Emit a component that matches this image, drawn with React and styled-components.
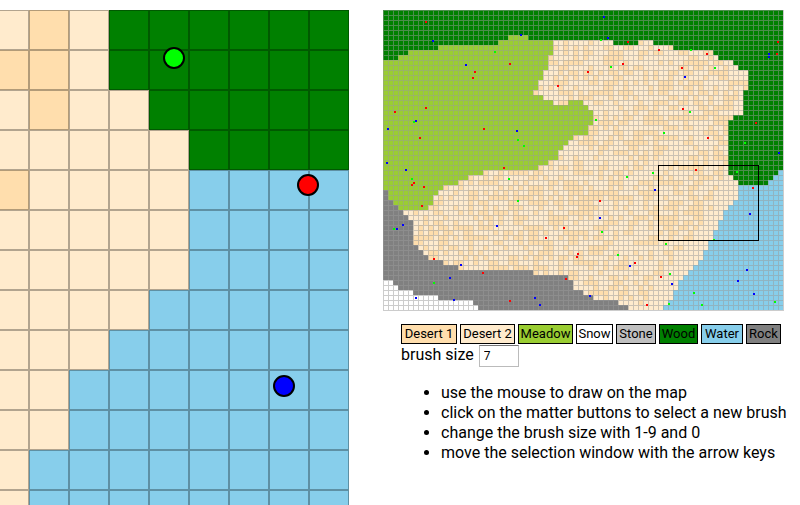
import React, { useState } from "react";
import styled, { createGlobalStyle } from "styled-components";

const GlobalStyle = createGlobalStyle`
  body {
    margin: 0;
    overflow: hidden;
    background: #fff;
    color: #000;
    font-family: "Trebuchet MS", Roboto, sans-serif;
    font-size: 16px;
    line-height: 20px;
  }
`;

const Page = styled.main`
  display: flex;
  align-items: flex-start;
  gap: 34px;
  height: 100vh;
  padding-top: 10px;
  box-sizing: border-box;
  overflow: hidden;
`;

const Viewport = styled.section`
  display: flex;
  justify-content: flex-end;
  flex: 0 0 349px;
  overflow: hidden;
`;

const MapDrawing = styled.svg`
  display: block;
  flex: none;
`;

const Sidebar = styled.section`
  flex: 1;
  min-width: 0;
`;

const Controls = styled.div`
  max-width: 380px;
  padding: 13px 0 0 18px;
`;

const Matters = styled.div`
  display: grid;
  grid-template-columns: 56fr 55fr 55fr 37fr 40fr 39fr 42fr 35fr;
  gap: 3px;
`;

const MatterButton = styled.button`
  height: 20px;
  padding: 0;
  border: 1px solid #000;
  border-radius: 0;
  background: ${(p) => p.$color};
  color: #000;
  font-family: inherit;
  font-size: 13px;
  line-height: 18px;
  white-space: nowrap;
`;

const BrushRow = styled.div`
  display: flex;
  align-items: flex-start;
  gap: 5px;
  padding-top: 1px;
`;

const BrushInput = styled.input`
  width: 40px;
  height: 22px;
  box-sizing: border-box;
  padding: 0 4px;
  border: 1px solid #bbb;
  border-top: 1px solid #777;
  border-radius: 0;
  background: #fff;
  color: #000;
  font-family: inherit;
  font-size: 12px;
`;

const Help = styled.ul`
  margin: 16px 0 0;
  padding-left: 58px;
  white-space: nowrap;
`;

const COLS = 80;
const ROWS = 60;
const MATTER = {
  desert1: "#ffdead",
  desert2: "#ffebcd",
  meadow: "#9acd32",
  snow: "#ffffff",
  stone: "#c0c0c0",
  wood: "#008000",
  water: "#87ceeb",
  rock: "#808080",
};

const BUTTONS = [
  ["Desert 1", "desert1"],
  ["Desert 2", "desert2"],
  ["Meadow", "meadow"],
  ["Snow", "snow"],
  ["Stone", "stone"],
  ["Wood", "wood"],
  ["Water", "water"],
  ["Rock", "rock"],
];

// Each entry is [matter, firstRow, lastRow, firstCol, lastCol], ends excluded.
const REGIONS = [
  ["meadow", 5, 9, 0, 34], ["meadow", 9, 12, 0, 33], ["meadow", 12, 14, 0, 32],
  ["meadow", 14, 16, 0, 31], ["meadow", 16, 17, 0, 30], ["meadow", 17, 18, 0, 32],
  ["meadow", 18, 19, 0, 34], ["meadow", 18, 19, 37, 40], ["meadow", 19, 20, 0, 41],
  ["meadow", 20, 23, 0, 42], ["meadow", 23, 25, 0, 41], ["meadow", 25, 26, 0, 38],
  ["meadow", 26, 27, 0, 37], ["meadow", 27, 28, 0, 36], ["meadow", 28, 30, 0, 35],
  ["meadow", 30, 31, 0, 33], ["meadow", 31, 32, 0, 31], ["meadow", 32, 33, 0, 20],
  ["meadow", 33, 34, 0, 17], ["meadow", 34, 35, 0, 15], ["meadow", 35, 36, 0, 12],
  ["meadow", 36, 37, 0, 11], ["meadow", 37, 39, 0, 10], ["meadow", 39, 40, 0, 9],
  ["wood", 0, 10, 0, 3], ["wood", 0, 9, 3, 5], ["wood", 0, 8, 5, 11],
  ["wood", 0, 7, 11, 23], ["wood", 0, 6, 23, 25], ["wood", 0, 5, 25, 29],
  ["wood", 0, 6, 29, 46], ["wood", 0, 7, 46, 51], ["wood", 0, 6, 51, 54],
  ["wood", 0, 7, 54, 58], ["wood", 0, 8, 58, 66], ["wood", 0, 9, 66, 67],
  ["wood", 0, 10, 67, 70], ["wood", 0, 11, 70, 71], ["wood", 0, 12, 71, 73],
  ["wood", 0, 16, 73, 80], ["wood", 16, 21, 72, 80], ["wood", 21, 22, 70, 80],
  ["wood", 22, 33, 69, 80], ["wood", 33, 34, 70, 80], ["wood", 34, 35, 71, 80],
  ["water", 32, 35, 79, 80], ["water", 33, 35, 78, 79], ["water", 34, 35, 77, 78],
  ["water", 35, 38, 71, 80], ["water", 38, 39, 70, 80], ["water", 39, 40, 69, 80],
  ["water", 40, 42, 68, 80], ["water", 42, 44, 67, 80], ["water", 44, 46, 66, 80],
  ["water", 46, 48, 65, 80], ["water", 48, 50, 64, 80], ["water", 50, 51, 63, 80],
  ["water", 51, 52, 62, 80], ["water", 52, 53, 61, 80], ["water", 53, 54, 60, 80],
  ["water", 54, 56, 59, 80], ["water", 56, 58, 58, 80], ["water", 58, 59, 57, 80],
  ["water", 59, 60, 56, 80],
  ["rock", 36, 38, 0, 1], ["rock", 38, 39, 0, 2], ["rock", 39, 40, 0, 3],
  ["rock", 40, 41, 0, 4], ["rock", 41, 42, 0, 5], ["rock", 42, 47, 0, 6],
  ["rock", 47, 48, 0, 7], ["rock", 48, 49, 0, 8], ["rock", 49, 50, 0, 9],
  ["rock", 50, 51, 0, 12], ["rock", 51, 52, 0, 15], ["rock", 52, 53, 0, 30],
  ["rock", 53, 54, 0, 37], ["rock", 54, 56, 0, 38], ["rock", 56, 57, 0, 40],
  ["rock", 57, 58, 0, 42], ["rock", 58, 59, 0, 47], ["rock", 59, 60, 0, 49],
  ["snow", 54, 55, 0, 2], ["snow", 55, 56, 0, 3], ["snow", 56, 57, 0, 6],
  ["snow", 57, 58, 0, 11], ["snow", 58, 59, 0, 18], ["snow", 59, 60, 0, 19],
];

const VIEW = { col: 55, row: 31, cols: 20, rows: 15 };
const SHORE_SAND = ["67,31", "66,32", "67,32", "67,33", "66,35"];

// First column of the plain sand strip along the eastern shore.
function shoreStart(row) {
  if (row < 31) return COLS;
  if (row < 38) return 66;
  return 66 - Math.floor((row - 38) * 0.7);
}

function buildTerrain() {
  let seed = 4711;
  const random = () => {
    seed = (seed * 1664525 + 1013904223) % 4294967296;
    return seed / 4294967296;
  };
  const grid = [];
  for (let r = 0; r < ROWS; r++) {
    const line = [];
    for (let c = 0; c < COLS; c++) {
      const darker = random() < 0.43;
      const plain = c >= shoreStart(r);
      const sand = plain ? SHORE_SAND.includes(`${c},${r}`) : darker;
      line.push(sand ? "desert1" : "desert2");
    }
    grid.push(line);
  }
  REGIONS.forEach(([matter, r0, r1, c0, c1]) => {
    for (let r = r0; r < r1; r++) {
      for (let c = c0; c < c1; c++) grid[r][c] = matter;
    }
  });
  return grid;
}

const terrain = buildTerrain();

const CREATURES = {
  "#ff0000": [
    [43, 11], [127, 53], [92, 61], [90, 67], [43, 97], [12, 101], [245, 31],
    [240, 53], [205, 61], [175, 75], [395, 31], [394, 43], [276, 39], [324, 43],
    [299, 57], [300, 98], [101, 118], [37, 127], [31, 172], [29, 174], [41, 176],
    [39, 195], [121, 157], [217, 190], [325, 127], [373, 112], [313, 159],
    [370, 177], [181, 217], [163, 227], [195, 243], [194, 246], [51, 248],
    [100, 262], [183, 268], [127, 290], [252, 252], [278, 266], [264, 294],
  ],
  "#00ff00": [
    [112, 41], [218, 29], [228, 56], [308, 39], [332, 57], [307, 101], [31, 111],
    [29, 168], [135, 129], [126, 168], [135, 190], [213, 109], [141, 135],
    [244, 166], [281, 122], [362, 132], [270, 162], [354, 161], [11, 218],
    [51, 272], [219, 221], [235, 244], [283, 233], [331, 229], [287, 263],
    [286, 293], [311, 282], [319, 294], [392, 291],
  ],
  "#0000ff": [
    [50, 30], [83, 54], [221, 6], [138, 24], [225, 27], [386, 43], [386, 46],
    [302, 66], [5, 118], [33, 110], [4, 152], [23, 159], [134, 120], [217, 207],
    [396, 142], [272, 179], [367, 203], [20, 214], [14, 218], [114, 215],
    [78, 254], [67, 267], [33, 287], [71, 289], [152, 287], [157, 294],
    [247, 255], [289, 273], [207, 285], [355, 270], [364, 259], [371, 283],
  ],
};

const NEARBY = [
  { x: 185, y: 48, color: "#00ff00" },
  { x: 319, y: 175, color: "#ff0000" },
  { x: 295, y: 376, color: "#0000ff" },
];

function DetailMap({ cell = 40, visible = 9 }) {
  const firstCol = VIEW.col + VIEW.cols - visible;
  const cells = [];
  for (let r = 0; r < VIEW.rows; r++) {
    for (let c = 0; c < visible; c++) {
      cells.push(
        <g key={`${r}-${c}`}>
          <rect x={c * cell} y={r * cell} width={cell} height={cell}
            fill={MATTER[terrain[VIEW.row + r][firstCol + c]]} />
          <rect x={c * cell + 0.5} y={r * cell + 0.5} width={cell - 1} height={cell - 1}
            fill="none" stroke="#000" strokeOpacity="0.3" />
        </g>
      );
    }
  }
  return (
    <MapDrawing width={visible * cell} height={VIEW.rows * cell} role="img" aria-label="Selected area">
      {cells}
      {NEARBY.map((n) => (
        <circle key={n.color} cx={n.x} cy={n.y} r="10" fill={n.color} stroke="#000" strokeWidth="2" />
      ))}
    </MapDrawing>
  );
}

function WorldMap({ cell = 5 }) {
  const width = COLS * cell + 1;
  const height = ROWS * cell + 1;
  return (
    <MapDrawing width={width} height={height} role="img" aria-label="World map" shapeRendering="crispEdges">
      <defs>
        <pattern id="mesh" width={cell} height={cell} patternUnits="userSpaceOnUse">
          <path d={`M0 0H${cell}V1H1V${cell}H0Z`} fill="#999" fillOpacity="0.5" />
        </pattern>
      </defs>
      {terrain.map((line, r) =>
        line.map((matter, c) => (
          <rect key={`${r}-${c}`} x={c * cell} y={r * cell} width={cell} height={cell} fill={MATTER[matter]} />
        ))
      )}
      <rect width={width} height={height} fill="url(#mesh)" />
      {Object.entries(CREATURES).map(([color, points]) =>
        points.map(([x, y]) => (
          <rect key={`${color}-${x}-${y}`} x={x - 1} y={y} width="2" height="2" fill={color} />
        ))
      )}
      <rect x={VIEW.col * cell + 0.5} y={VIEW.row * cell + 0.5} width={VIEW.cols * cell}
        height={VIEW.rows * cell} fill="none" stroke="#000" />
    </MapDrawing>
  );
}

export default function App() {
  const [matter, setMatter] = useState("desert1");
  const [brush, setBrush] = useState("7");
  return (
    <>
      <GlobalStyle />
      <Page>
        <Viewport>
          <DetailMap />
        </Viewport>
        <Sidebar>
          <WorldMap />
          <Controls>
            <Matters>
              {BUTTONS.map(([label, name]) => (
                <MatterButton key={name} type="button" $color={MATTER[name]}
                  aria-pressed={matter === name} onClick={() => setMatter(name)}>
                  {label}
                </MatterButton>
              ))}
            </Matters>
            <BrushRow>
              <label htmlFor="brush">brush size</label>
              <BrushInput id="brush" value={brush} onChange={(e) => setBrush(e.target.value)} />
            </BrushRow>
          </Controls>
          <Help>
            <li>use the mouse to draw on the map</li>
            <li>click on the matter buttons to select a new brush</li>
            <li>change the brush size with 1-9 and 0</li>
            <li>move the selection window with the arrow keys</li>
          </Help>
        </Sidebar>
      </Page>
    </>
  );
}
